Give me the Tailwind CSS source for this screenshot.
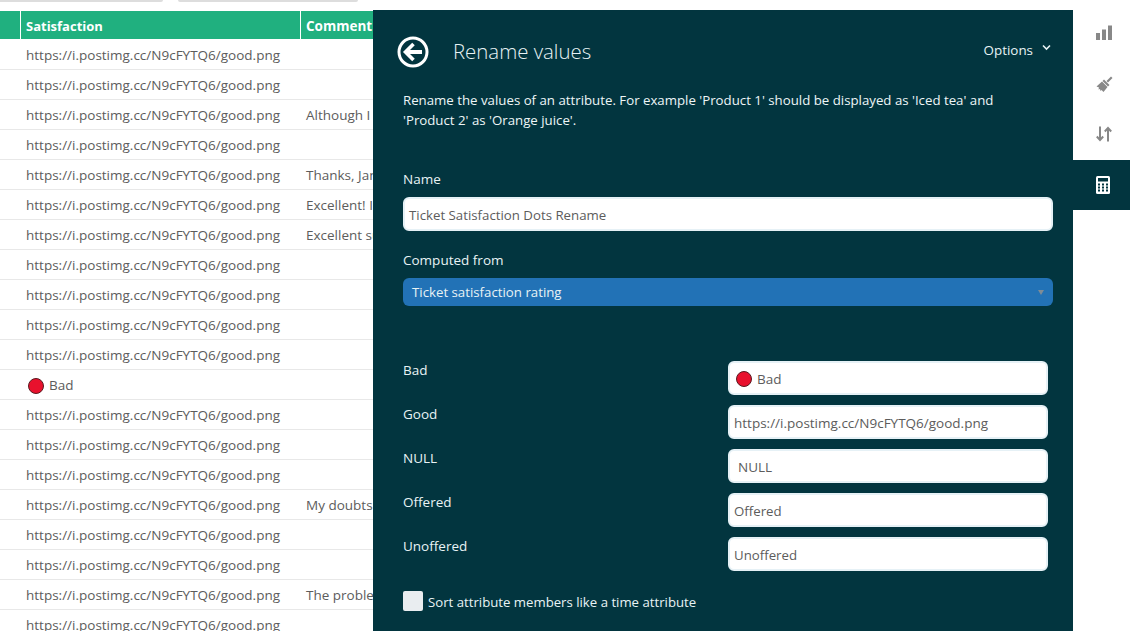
<!DOCTYPE html>
<html lang="en">
<head>
  <meta charset="UTF-8">
  <title>Rename values</title>
  <script src="https://cdn.jsdelivr.net/npm/@tailwindcss/browser@4"></script>
</head>
<body class="w-[1130px] h-[631px] overflow-hidden bg-white font-['Open_Sans','Noto_Sans',sans-serif] text-[13.5px] text-[#5c5c5c]">
  <!-- top strip with the ends of the tabs -->
  <div class="h-[10px] flex gap-[15px] items-start">
    <div class="w-[163px] h-[2px] bg-[#ddd] rounded-br"></div>
    <div class="w-[180px] h-[2px] bg-[#ddd] rounded-b"></div>
  </div>
  <div class="flex h-[621px]">
    <!-- table behind the panel -->
    <div class="w-[373px] overflow-hidden pt-px">
      <div class="grid grid-cols-[21px_280px_200px] w-[501px] text-[13px] font-bold text-white">
        <div class="h-[28px] bg-[#20b07f] border-r border-white"></div>
        <div class="h-[28px] bg-[#20b07f] border-r border-white pl-[5px] pt-px leading-[28px]">Satisfaction</div>
        <div class="h-[28px] bg-[#20b07f] pl-[5px] pt-px leading-[28px] text-[13.5px]">Comment</div>
      </div>
      <div id="rows" class="pt-px"></div>
    </div>

    <!-- panel -->
    <div class="w-[700px] bg-[#02353f] pl-[30px] pr-[20px] text-[#e8f3f5]">
      <div class="flex items-center h-[84px] pb-[1px] -ml-[6px]">
        <svg class="w-[32px] h-[32px]" viewBox="0 0 32 32" fill="none" stroke="#fff">
          <circle cx="16" cy="16" r="14" stroke-width="3"/>
          <path d="M16.5 8 L8.5 16 L16.5 24" stroke-width="3.6" stroke-linejoin="miter"/>
          <path d="M9.5 16 H25" stroke-width="4"/>
        </svg>
        <h1 class="ml-[24px] text-[20.4px] font-light text-[#e8f3f5]">Rename values</h1>
        <div class="ml-auto flex items-center gap-[9px] mr-[2px] mb-[2px] text-[13.4px]">
          <span>Options</span>
          <svg class="w-[9px] h-[7px] mb-[5px]" viewBox="0 0 9 7" fill="none" stroke="#e8f3f5" stroke-width="1.6"><path d="M1 1.5 L4.5 5 L8 1.5"/></svg>
        </div>
      </div>
      <p class="leading-[20px] text-[13.25px] font-medium text-[#eef6f7] whitespace-nowrap -mt-[4px]">Rename the values of an attribute. For example 'Product 1' should be displayed as 'Iced tea' and<br>'Product 2' as 'Orange juice'.</p>

      <div class="mt-[39px] leading-[20px] font-medium">Name</div>
      <div class="mt-[8px] h-[34px] bg-white rounded-[6px] border-2 border-[#e6f1f6] pl-[4px] pt-[4px] flex items-center text-[13.25px] text-[#5c5c5c]">Ticket Satisfaction Dots Rename</div>

      <div class="mt-[19px] leading-[20px] font-medium">Computed from</div>
      <div class="mt-[8px] h-[28px] bg-[#2272b6] rounded-[6px] pl-[9px] pr-[9px] flex items-center justify-between text-[13.25px] font-medium text-[#e8f3f5]">
        <span class="pt-[2px]">Ticket satisfaction rating</span>
        <svg class="w-[6px] h-[5px]" viewBox="0 0 6 5"><path d="M0 0 H6 L3 5 Z" fill="#7f8c96"/></svg>
      </div>

      <div class="mt-[55px] grid grid-cols-[325px_320px] gap-y-[10px]">
        <div class="leading-[18px] font-medium">Bad</div>
        <div class="h-[34px] bg-white rounded-[6px] border-2 border-[#e6f1f6] flex items-center pl-[6px] pt-[2px] gap-[5px] text-[#5c5c5c]"><span class="w-[16px] h-[16px] rounded-full bg-[#e8112d] border border-[#5a1a20]"></span><span>Bad</span></div>
        <div class="leading-[18px] font-medium">Good</div>
        <div class="h-[34px] bg-white rounded-[6px] border-2 border-[#e6f1f6] flex items-center pl-[4px] pt-[2px] text-[#5c5c5c]">https://i.postimg.cc/N9cFYTQ6/good.png</div>
        <div class="leading-[18px] font-medium">NULL</div>
        <div class="h-[34px] bg-white rounded-[6px] border-2 border-[#e6f1f6] flex items-center pl-[8px] pt-[2px] text-[#5c5c5c]">NULL</div>
        <div class="leading-[18px] font-medium">Offered</div>
        <div class="h-[34px] bg-white rounded-[6px] border-2 border-[#e6f1f6] flex items-center pl-[4px] pt-[4px] text-[13.25px] text-[#5c5c5c]">Offered</div>
        <div class="leading-[18px] font-medium">Unoffered</div>
        <div class="h-[34px] bg-white rounded-[6px] border-2 border-[#e6f1f6] flex items-center pl-[4px] pt-[4px] text-[13.25px] text-[#5c5c5c]">Unoffered</div>
      </div>

      <div class="mt-[20px] flex items-center gap-[5px] text-[13.2px] font-medium">
        <span class="w-[20px] h-[20px] -mt-[2px] rounded-[2px] bg-[#e9edf0]"></span>
        <span class="pt-[2px]">Sort attribute members like a time attribute</span>
      </div>
    </div>

    <!-- right side tabs -->
    <div class="w-[57px] flex flex-col">
      <div class="h-[50px] flex items-center justify-center pl-[5px] pb-[4px]">
        <svg class="w-[16px] h-[16px]" viewBox="0 0 16 16" fill="#888"><rect x="0" y="8" width="4" height="7"/><rect x="6" y="4.5" width="4" height="10.5"/><rect x="12" y="0.5" width="4" height="14.500"/></svg>
      </div>
      <div class="h-[50px] flex items-center justify-center pl-[5px] pb-[2px]">
        <svg class="w-[17px] h-[17px]" viewBox="0 0 17 17" fill="#888"><path d="M10.500 5 L15 0.500 L16.500 2 L12 6.500 Z"/><path d="M8 3.500 L13.500 9 L12 10.500 L6.500 5 Z"/><path d="M6 5.500 L11.500 11 L7.500 16 L5.500 14 L4.500 15 L4 13 L2.500 13.500 L3 11.500 L0.500 10.500 Z"/></svg>
      </div>
      <div class="h-[50px] flex items-center justify-center pl-[5px] pb-[2px]">
        <svg class="w-[16px] h-[16px]" viewBox="0 0 16 16" fill="none" stroke="#888" stroke-width="2"><path d="M4 0.500 V14"/><path d="M0.800 10.500 L4 14 L7.200 10.500"/><path d="M12 15.500 V2"/><path d="M8.800 5.500 L12 2 L15.200 5.500"/></svg>
      </div>
      <div class="h-[50px] bg-[#02353f] flex items-center justify-center pl-[3px]">
        <svg class="w-[14px] h-[18px]" viewBox="0 0 14 18"><rect width="14" height="18" rx="1.500" fill="#fff"/><rect x="2" y="2" width="10" height="3.500" fill="#02353f"/><g fill="#02353f"><rect x="2" y="7.500" width="2" height="2"/><rect x="6" y="7.500" width="2" height="2"/><rect x="10" y="7.500" width="2" height="2"/><rect x="2" y="10.500" width="2" height="2"/><rect x="6" y="10.500" width="2" height="2"/><rect x="10" y="10.500" width="2" height="2"/><rect x="2" y="13.500" width="2" height="2"/><rect x="6" y="13.500" width="2" height="2"/><rect x="10" y="13.500" width="2" height="2"/></g></svg>
      </div>
    </div>
  </div>
  <script>
    // satisfaction rows, comment is what shows next to the panel
    const url = 'https://i.postimg.cc/N9cFYTQ6/good.png';
    const comments = { 2: 'Although I', 4: 'Thanks, Jan', 5: 'Excellent! I', 6: 'Excellent su', 15: 'My doubts', 18: 'The proble' };
    const rows = document.getElementById('rows');
    for (let i = 0; i < 20; i++) {
      const row = document.createElement('div');
      if (i === 11) {
        row.className = 'flex h-[30px] pt-[2px] border-b border-[#e8e8e8] items-center pl-[28px] gap-[5px]';
        row.innerHTML = '<span class="w-[16px] h-[16px] rounded-full bg-[#e8112d] border border-[#5a1a20]"></span><span>Bad</span>';
      } else {
        row.className = 'flex h-[30px] pt-[2px] border-b border-[#e8e8e8] items-center pl-[26px] whitespace-nowrap';
        row.innerHTML = '<span class="w-[280px] shrink-0">' + url + '</span><span>' + (comments[i] || '') + '</span>';
      }
      rows.appendChild(row);
    }
  </script>
</body>
</html>
